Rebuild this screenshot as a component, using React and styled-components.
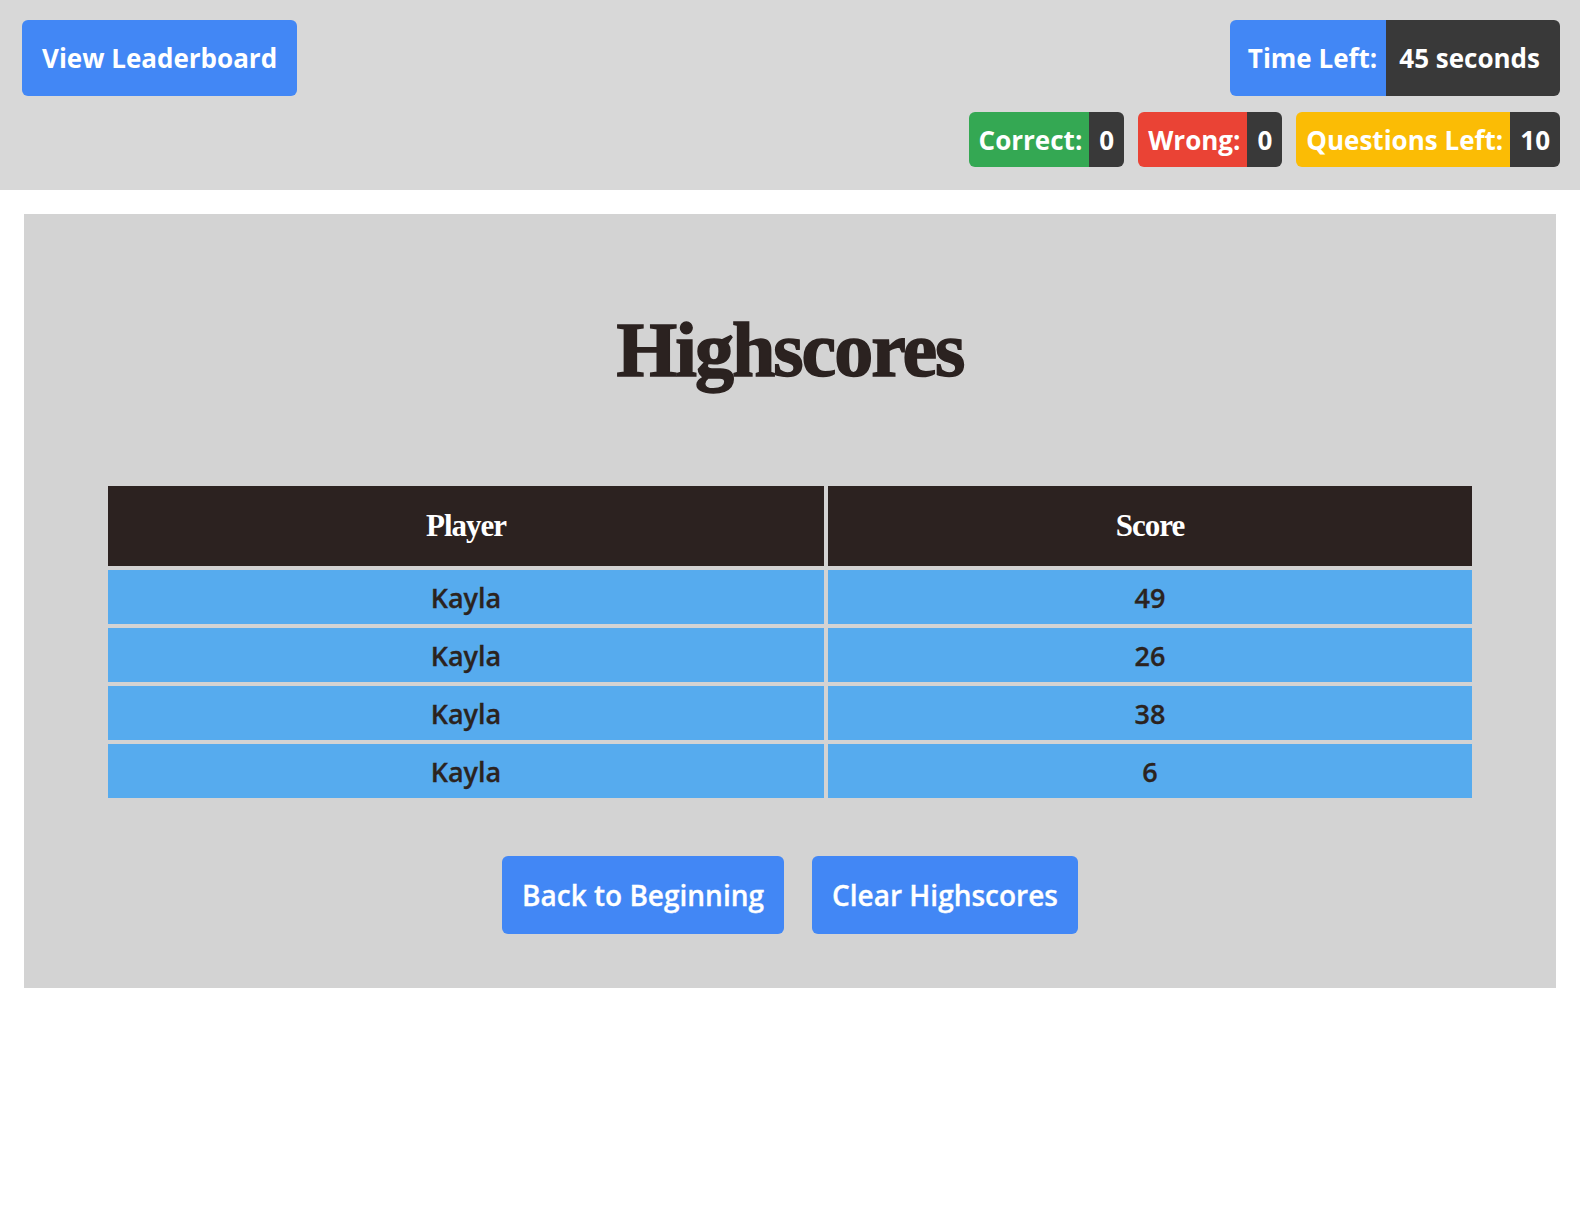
import React from "react";
import styled, { createGlobalStyle } from "styled-components";

const GlobalStyle = createGlobalStyle`
  body {
    margin: 0;
    background: #ffffff;
    font-family: "Open Sans", "Liberation Sans", sans-serif;
  }
`;

const scores = [
  { player: "Kayla", score: 49 },
  { player: "Kayla", score: 26 },
  { player: "Kayla", score: 38 },
  { player: "Kayla", score: 6 },
];

function App() {
  return (
    <>
      <GlobalStyle />
      <Header>
        <Button $bold>View Leaderboard</Button>
        <Stats>
          <TimeBadge>
            <TimeLabel>Time Left:</TimeLabel>
            <TimeValue>45 seconds</TimeValue>
          </TimeBadge>
          <StatRow>
            <Badge>
              <BadgeLabel $color="#34a853">Correct:</BadgeLabel>
              <BadgeValue>0</BadgeValue>
            </Badge>
            <Badge>
              <BadgeLabel $color="#ea4335">Wrong:</BadgeLabel>
              <BadgeValue>0</BadgeValue>
            </Badge>
            <Badge>
              <BadgeLabel $color="#fbbc05">Questions Left:</BadgeLabel>
              <BadgeValue>10</BadgeValue>
            </Badge>
          </StatRow>
        </Stats>
      </Header>

      <Panel>
        <Heading>Highscores</Heading>
        <Table>
          <colgroup>
            <col style={{ width: 716 }} />
            <col style={{ width: 644 }} />
          </colgroup>
          <thead>
            <tr>
              <HeadCell>Player</HeadCell>
              <HeadCell>Score</HeadCell>
            </tr>
          </thead>
          <tbody>
            {scores.map((row, i) => (
              <tr key={i}>
                <Cell>{row.player}</Cell>
                <Cell>{row.score}</Cell>
              </tr>
            ))}
          </tbody>
        </Table>
        <Actions>
          <Button>Back to Beginning</Button>
          <Button>Clear Highscores</Button>
        </Actions>
      </Panel>
    </>
  );
}

export default App;

const Header = styled.header`
  display: flex;
  justify-content: space-between;
  align-items: flex-start;
  height: 190px;
  box-sizing: border-box;
  padding: 20px 20px 0 22px;
  background: #d8d8d8;
`;

const Button = styled.button`
  height: ${(p) => (p.$bold ? "76px" : "78px")};
  padding: 0 20px;
  border: none;
  border-radius: 6px;
  background: #4287f5;
  color: #ffffff;
  font-family: "Open Sans", "Liberation Sans", sans-serif;
  font-size: ${(p) => (p.$bold ? "26px" : "28px")};
  font-weight: ${(p) => (p.$bold ? 700 : 600)};
  -webkit-text-stroke: ${(p) => (p.$bold ? "0" : "0.3px")};
  cursor: pointer;
`;

const Stats = styled.div`
  display: flex;
  flex-direction: column;
  align-items: flex-end;
  gap: 16px;
`;

const TimeBadge = styled.div`
  display: flex;
  height: 76px;
  border-radius: 6px;
  overflow: hidden;
  color: #ffffff;
  font-size: 26px;
  font-weight: 700;
`;

const TimeLabel = styled.span`
  display: flex;
  align-items: center;
  padding: 0 9px 0 18px;
  background: #4287f5;
`;

const TimeValue = styled.span`
  display: flex;
  align-items: center;
  padding: 0 20px 0 13px;
  background: #393939;
`;

const StatRow = styled.div`
  display: flex;
  gap: 14px;
`;

const Badge = styled.div`
  display: flex;
  height: 55px;
  border-radius: 6px;
  overflow: hidden;
  color: #ffffff;
  font-size: 26px;
  font-weight: 700;
`;

const BadgeLabel = styled.span`
  display: flex;
  align-items: center;
  padding: 0 7px 0 10px;
  background: ${(p) => p.$color};
`;

const BadgeValue = styled.span`
  display: flex;
  align-items: center;
  padding: 0 10px;
  background: #393939;
`;

const Panel = styled.main`
  margin: 24px;
  padding: 92px 80px 54px;
  background: #d3d3d3;
`;

const Heading = styled.h1`
  margin: 0 0 88px;
  line-height: 88px;
  text-align: center;
  font-family: "Liberation Serif", "DejaVu Serif", serif;
  font-size: 78px;
  font-weight: 900;
  letter-spacing: -2px;
  -webkit-text-stroke: 1.5px #2b2220;
  color: #2b2220;
`;

const Table = styled.table`
  width: 1372px;
  table-layout: fixed;
  border-spacing: 4px;
`;

const HeadCell = styled.th`
  height: 80px;
  padding: 0;
  background: #2c2220;
  color: #ffffff;
  font-family: "Liberation Serif", "DejaVu Serif", serif;
  font-size: 31px;
  font-weight: 700;
  letter-spacing: -1px;
`;

const Cell = styled.td`
  height: 54px;
  padding: 0;
  background: #56abee;
  color: #2b2320;
  text-align: center;
  font-size: 27px;
  font-weight: 600;
  -webkit-text-stroke: 0.3px #2b2320;
`;

const Actions = styled.div`
  display: flex;
  justify-content: center;
  gap: 28px;
  margin-top: 54px;
`;
